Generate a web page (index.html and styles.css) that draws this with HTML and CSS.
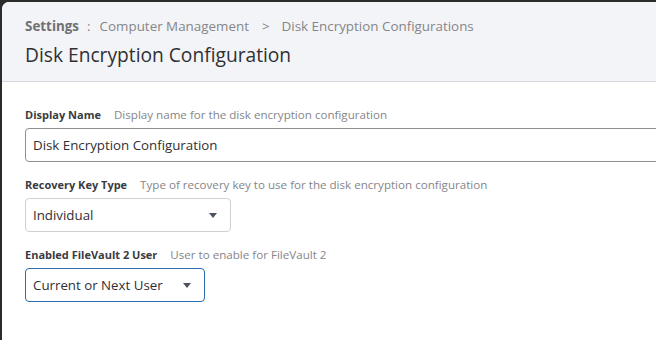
FILE: index.html
```html
<!DOCTYPE html>
<html lang="en">
<head>
    <meta charset="UTF-8" />
    <title>Disk Encryption Configuration</title>
    <link rel="stylesheet" href="styles.css">
</head>
<body>
<div class="window">
    <header class="page-header">
        <nav class="breadcrumb">
            <span class="crumb-root">Settings</span>
            <span class="crumb-sep sep-colon">:</span>
            <span>Computer Management</span>
            <span class="crumb-sep sep-arrow">&gt;</span>
            <span>Disk Encryption Configurations</span>
        </nav>
        <h1>Disk Encryption Configuration</h1>
    </header>

    <main class="form">
        <div class="field">
            <div class="field-label">
                <span class="label-name">Display Name</span>
                <span class="label-help">Display name for the disk encryption configuration</span>
            </div>
            <div class="input input-wide">Disk Encryption Configuration</div>
        </div>

        <div class="field">
            <div class="field-label">
                <span class="label-name">Recovery Key Type</span>
                <span class="label-help">Type of recovery key to use for the disk encryption configuration</span>
            </div>
            <div class="select select-key">
                <span>Individual</span>
                <span class="caret"></span>
            </div>
        </div>

        <div class="field">
            <div class="field-label">
                <span class="label-name">Enabled FileVault 2 User</span>
                <span class="label-help">User to enable for FileVault 2</span>
            </div>
            <div class="select select-user focused">
                <span>Current or Next User</span>
                <span class="caret"></span>
            </div>
        </div>
    </main>
</div>
</body>
</html>
```

FILE: styles.css
```css
:root {
    --primary-text: #2f3035;
    --secondary-text: #6f7073;
    --muted-text: #85868a;
    --header-bg: #f3f4f7;
    --border-color: #d6d7da;
    --input-border: #8e8f92;
    --focus-color: #2a6db3;
    --font: 'Open Sans', sans-serif;
}

*, *::before, *::after { box-sizing: border-box; margin: 0; }

body {
    font-family: var(--font);
    background-color: #2b2b2b;
    color: var(--primary-text);
    padding: 2px 0 0 2px;
    height: 340px;
    overflow: hidden;
}

.window {
    background-color: #fff;
    border-top-left-radius: 7px;
    height: 338px;
    overflow: hidden;
}

.page-header {
    background-color: var(--header-bg);
    border-bottom: 1px solid var(--border-color);
    padding: 15px 23px 0;
    height: 80px;
}

.breadcrumb {
    display: flex; align-items: center;
    font-size: 13.4px; color: var(--muted-text);
    height: 18px;
}
.crumb-root { font-weight: 700; color: var(--secondary-text); }
.sep-colon { margin: 0 9px 0 8px; }
.sep-arrow { margin: 0 12px 0 13px; }

h1 {
    font-size: 19.2px; font-weight: 400; margin-top: 6px;
    color: var(--primary-text);
}

.form { padding: 24px 23px 0; }

.field { margin-bottom: 14px; }
.field-label {
    display: flex; align-items: center; gap: 13px;
    font-size: 11px; margin-bottom: 6px; height: 16px;
}
.label-name { font-weight: 700; color: #3a3b3f; }
.label-help { color: var(--muted-text); font-size: 11.6px; }

.input, .select {
    height: 34px; border-radius: 4px; display: flex; align-items: center;
    padding: 0 7px; font-size: 13.3px; color: var(--primary-text);
    border: 1px solid var(--input-border);
}
.input-wide { width: 700px; }

.select { justify-content: space-between; border-color: #cfd0d3; padding-right: 13px; }
.select-key { width: 206px; }
.select-user { width: 180px; }
.select.focused { border-color: var(--focus-color); }

.caret {
    width: 0; height: 0;
    border-left: 4px solid transparent;
    border-right: 4px solid transparent;
    border-top: 5px solid #4c5260;
}
```
